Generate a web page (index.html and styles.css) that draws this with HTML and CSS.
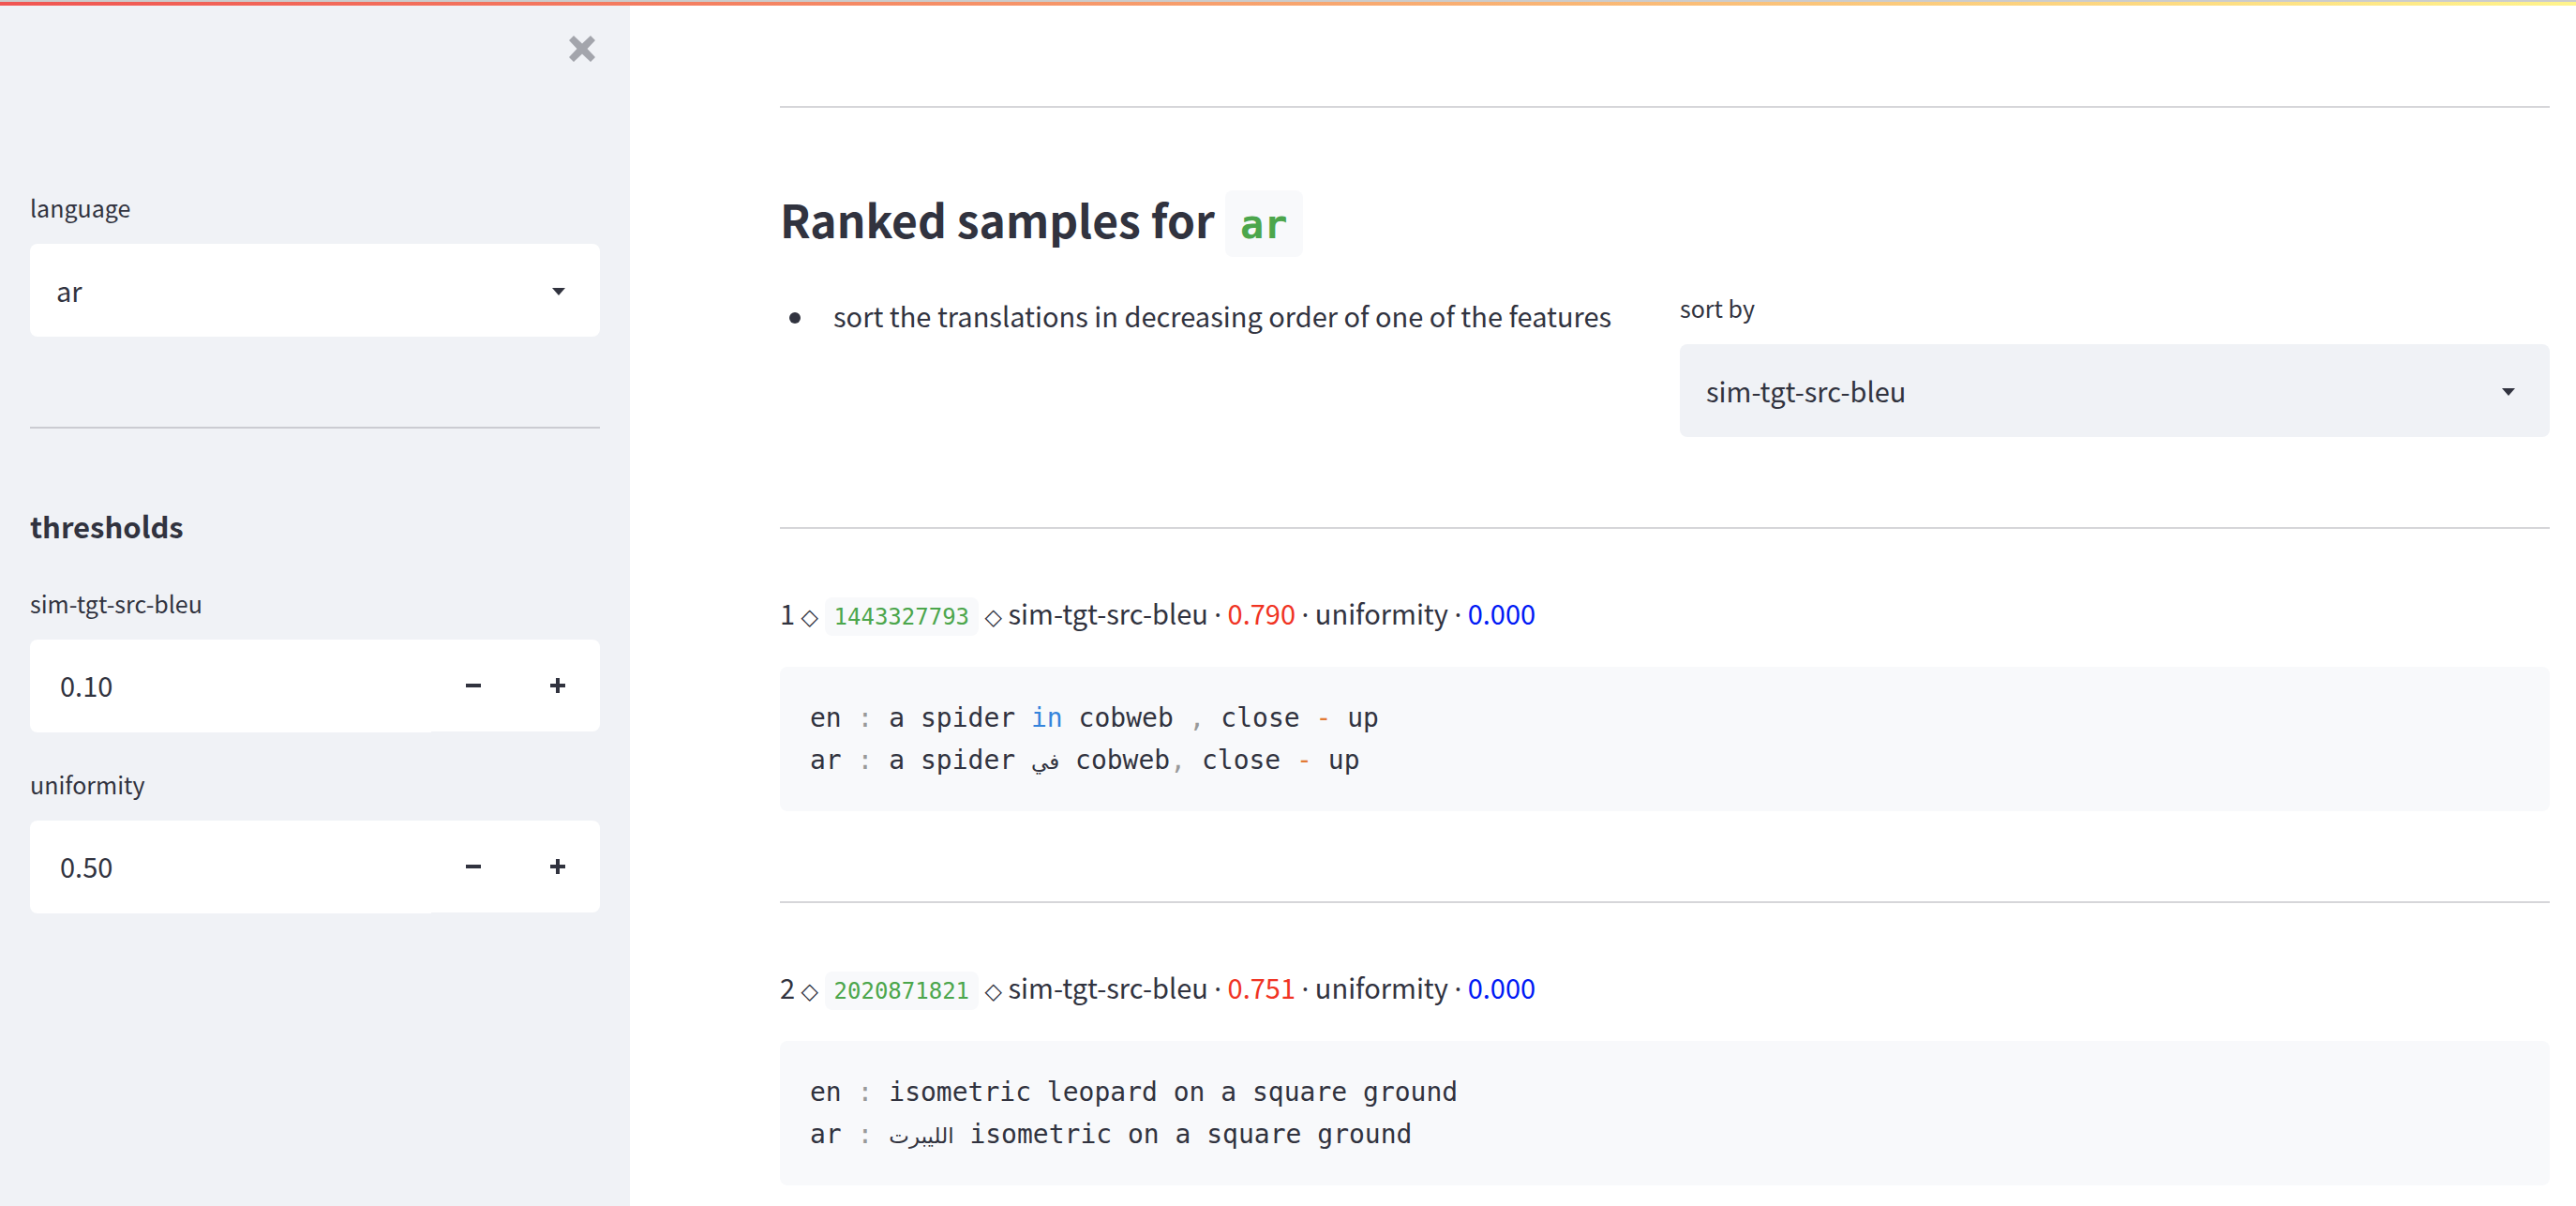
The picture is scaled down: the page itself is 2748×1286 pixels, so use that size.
FILE: index.html
```html
<!DOCTYPE html>
<html lang="en">
<head>
<meta charset="utf-8">
<meta name="viewport" content="width=device-width, initial-scale=1">
<title>Ranked samples</title>
<link rel="stylesheet" href="styles.css">
</head>
<body>
<div class="decoration"></div>
<div class="layout">
  <aside class="sidebar">
    <header class="sidebar-head">
      <button class="close" type="button" aria-label="Close sidebar">
        <svg width="28" height="28" viewBox="0 0 28 28" aria-hidden="true"><path d="M5 0L14 8.500L23 0L28 5L19.500 14L28 23L23 28L14 19.500L5 28L0 23L8.500 14L0 5Z"/></svg>
      </button>
    </header>
    <div class="field">
      <label for="language">language</label>
      <div class="select">
        <select id="language"><option>ar</option></select>
        <svg width="14" height="8" viewBox="0 0 14 8" aria-hidden="true"><path d="M0 0H14L7 8Z"/></svg>
      </div>
    </div>
    <hr>
    <h3>thresholds</h3>
    <div class="field">
      <label for="bleu">sim-tgt-src-bleu</label>
      <div class="number">
        <input id="bleu" type="number" step="0.01" value="0.10">
        <button type="button" aria-label="Decrease sim-tgt-src-bleu"><svg width="16" height="16" viewBox="0 0 16 16" aria-hidden="true"><path d="M0 6H16V10H0Z"/></svg></button>
        <button type="button" aria-label="Increase sim-tgt-src-bleu"><svg width="16" height="16" viewBox="0 0 16 16" aria-hidden="true"><path d="M6 0H10V6H16V10H10V16H6V10H0V6H6Z"/></svg></button>
      </div>
    </div>
    <div class="field">
      <label for="uniformity">uniformity</label>
      <div class="number">
        <input id="uniformity" type="number" step="0.01" value="0.50">
        <button type="button" aria-label="Decrease uniformity"><svg width="16" height="16" viewBox="0 0 16 16" aria-hidden="true"><path d="M0 6H16V10H0Z"/></svg></button>
        <button type="button" aria-label="Increase uniformity"><svg width="16" height="16" viewBox="0 0 16 16" aria-hidden="true"><path d="M6 0H10V6H16V10H10V16H6V10H0V6H6Z"/></svg></button>
      </div>
    </div>
  </aside>
  <main>
    <hr>
    <h2>Ranked samples for <code>ar</code></h2>
    <div class="columns">
      <ul><li>sort the translations in decreasing order of one of the features</li></ul>
      <div class="field">
        <label for="sort">sort by</label>
        <div class="select tinted">
          <select id="sort"><option>sim-tgt-src-bleu</option></select>
          <svg width="14" height="8" viewBox="0 0 14 8" aria-hidden="true"><path d="M0 0H14L7 8Z"/></svg>
        </div>
      </div>
    </div>
    <hr>
    <section class="sample">
      <p>1 <span class="diamond">◇</span> <code>1443327793</code> <span class="diamond">◇</span> sim-tgt-src-bleu <span class="dot">·</span> <span class="score">0.790</span> <span class="dot">·</span> uniformity <span class="dot">·</span> <span class="uniform">0.000</span></p>
<pre>en <i class="punct">:</i> a spider <i class="keyword">in</i> cobweb <i class="punct">,</i> close <i class="operator">-</i> up
ar <i class="punct">:</i> a spider <span class="arabic" lang="ar">في</span> cobweb<i class="punct">,</i> close <i class="operator">-</i> up</pre>
    </section>
    <hr>
    <section class="sample">
      <p>2 <span class="diamond">◇</span> <code>2020871821</code> <span class="diamond">◇</span> sim-tgt-src-bleu <span class="dot">·</span> <span class="score">0.751</span> <span class="dot">·</span> uniformity <span class="dot">·</span> <span class="uniform">0.000</span></p>
<pre>en <i class="punct">:</i> isometric leopard on a square ground
ar <i class="punct">:</i> <span class="arabic" lang="ar">الليبرت</span> isometric on a square ground</pre>
    </section>
  </main>
</div>
</body>
</html>
```
FILE: styles.css
```css
:root {
  --text: #31333f;
  --tint: #f0f2f6;
  --code: #f8f9fb;
  --sans: "Noto Sans CJK SC", "Noto Sans", sans-serif;
  --mono: "DejaVu Sans Mono", monospace;
}

* { box-sizing: border-box; }

body {
  margin: 0;
  color: var(--text);
  background: #fff;
  font: 29px/51px var(--sans);
}

.decoration {
  height: 6px;
  border-top: 2px solid #ccc;
  background: linear-gradient(90deg, #f05552, #fff48c) padding-box;
}

.layout {
  display: flex;
  min-height: calc(100vh - 6px);
}

.sidebar {
  flex: 0 0 672px;
  padding: 32px;
  background: var(--tint);
}

.sidebar-head {
  display: flex;
  justify-content: flex-end;
  height: 166px;
  padding-right: 5px;
}

button {
  border: 0;
  padding: 0;
  background: none;
  cursor: pointer;
}

.close {
  width: 28px;
  height: 28px;
}

.close svg {
  display: block;
  fill: #a3a5ac;
}

.field label {
  display: block;
  height: 56px;
  font-size: 25px;
  line-height: 34px;
}

.field + .field { margin-top: 38px; }

.select {
  display: grid;
  align-items: center;
  border-radius: 8px;
  background: #fff;
}

.select > * { grid-area: 1 / 1; }

.select select {
  width: 100%;
  height: 99px;
  padding: 0 64px 0 28px;
  border: 0;
  appearance: none;
  background: none;
  color: inherit;
  font: inherit;
}

.select svg {
  justify-self: end;
  margin: 2px 37px 0 0;
  fill: var(--text);
  pointer-events: none;
}

.tinted { background: var(--tint); }

hr {
  height: 2px;
  margin: 96px 0 64px;
  border: 0;
  background: #d6d6d9;
}

.sidebar hr {
  margin-bottom: 78px;
  background: #cbccd2;
}

h3 {
  margin: 0 0 40px;
  font-size: 31px;
  line-height: 51px;
}

.number { display: flex; }

.number input {
  flex: 1;
  min-width: 0;
  height: 99px;
  padding: 0 32px 4px;
  border: 0;
  border-radius: 8px 0 0 8px;
  appearance: textfield;
  background: #fff;
  color: inherit;
  font: inherit;
}

.number input::-webkit-inner-spin-button { appearance: none; }

.number button {
  width: 90px;
  height: 98px;
  background: #fff;
}

.number button:last-child { border-radius: 0 8px 8px 0; }

.number svg {
  display: block;
  margin: auto;
  fill: var(--text);
}

main {
  flex: 1;
  min-width: 0;
  padding: 11px 28px 0 160px;
}

h2 {
  margin: 78px 0 38px;
  font-size: 48px;
  line-height: 80px;
}

code {
  border-radius: 8px;
  background: var(--code);
  color: #4ca64c;
  font-family: var(--mono);
  line-height: 1;
}

h2 code {
  padding: 12px 16px 10px;
  font-size: 42px;
}

.columns {
  display: grid;
  grid-template-columns: 1fr 1fr;
  gap: 32px;
}

ul {
  margin: 0;
  padding: 0;
  list-style: none;
}

li {
  display: flex;
  align-items: center;
  gap: 35px;
  padding-left: 10px;
}

li::before {
  content: "";
  flex: none;
  width: 12px;
  height: 12px;
  margin-top: 4px;
  border-radius: 50%;
  background: var(--text);
}

.sample p {
  margin: 0 0 32px;
}

.sample code {
  padding: 7px 10px 6px;
  font-size: 24px;
}

.diamond {
  font-family: "DejaVu Sans", sans-serif;
  font-size: 24px;
  line-height: 1;
}

.dot {
  font-family: "Noto Sans", sans-serif;
  line-height: 1;
}

.score { color: #f03323; }
.uniform { color: #0019f5; }

pre {
  margin: 0;
  padding: 32px;
  border-radius: 8px;
  background: var(--code);
  font: 28px/45px var(--mono);
}

pre i { font-style: normal; }
.punct { color: #999; }
.keyword { color: #3584dc; }
.operator { color: #e27a35; }

.arabic {
  font-family: "DejaVu Sans", sans-serif;
  font-size: 23px;
  line-height: 1;
}
```
